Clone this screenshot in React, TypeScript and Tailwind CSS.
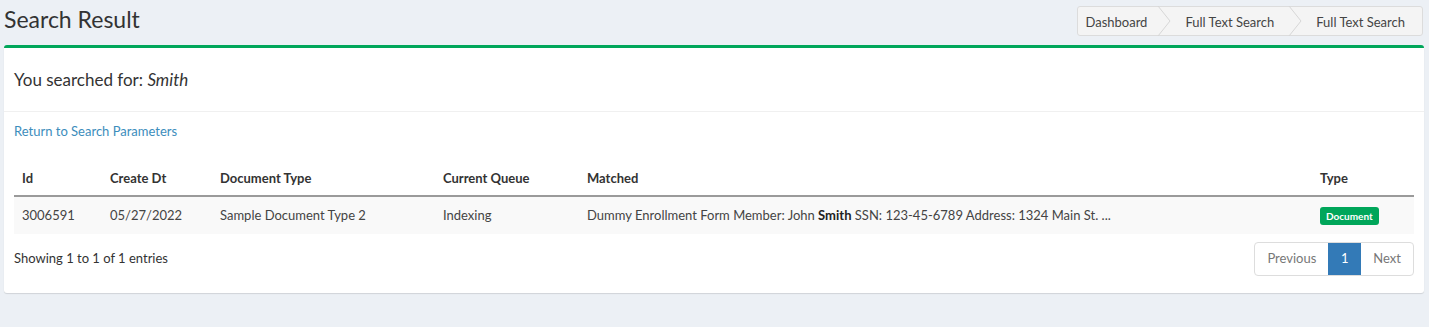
const columns = [
  { label: "Id", width: "w-[88px]" },
  { label: "Create Dt", width: "w-[110px]" },
  { label: "Document Type", width: "w-[223px]" },
  { label: "Current Queue", width: "w-[144px]" },
  { label: "Matched", width: "w-[733px]" },
  { label: "Type", width: "w-[102px]" },
];

function Chevron() {
  return (
    <svg width="14" height="30" viewBox="0 0 14 30" className="shrink-0">
      <polyline points="1,0 13,15 1,30" fill="none" stroke="#d6d6d6" strokeWidth="1" />
    </svg>
  );
}

export default function App() {
  return (
    <div className="min-h-[327px] bg-[#ecf0f5] font-['Lato','Liberation_Sans',sans-serif] text-[13px] text-[#333]">
      <div className="flex items-start justify-between pl-[4px] pr-[6px] pt-[6px]">
        <h1 className="text-[23px] leading-[26px] text-[#333]">Search Result</h1>
        <div className="flex h-[30px] items-center rounded-[3px] border border-[#dcdcdc] bg-[#f4f4f4] text-[13px] text-[#444]">
          <span className="pl-[7px] pr-[10px] pt-[3px]">Dashboard</span>
          <Chevron />
          <span className="px-[14px] pt-[3px]">Full Text Search</span>
          <Chevron />
          <span className="pl-[14px] pr-[17px] pt-[3px]">Full Text Search</span>
        </div>
      </div>

      <div className="mx-[4px] mr-[5px] mt-[9px] rounded-[3px] border-t-[3px] border-[#00a65a] bg-white shadow-[0_1px_1px_rgba(0,0,0,0.12)]">
        <div className="flex h-[64px] items-center border-b border-[#f0f0f0] px-[10px] pt-[1px] text-[17px] text-[#333]">
          You searched for:&nbsp;<em>Smith</em>
        </div>
        <div className="px-[10px] pb-[17px] pt-[10px]">
          <a href="#" className="text-[13px] leading-[18px] text-[#3c8dbc]">
            Return to Search Parameters
          </a>
          <table className="mt-[19px] w-full table-fixed border-collapse text-[13px]">
            <thead>
              <tr className="border-b-2 border-[#9a9a9a]">
                {columns.map((c) => (
                  <th key={c.label} className={`${c.width} px-[8px] py-[8px] text-left font-bold leading-[18px] text-[#333]`}>
                    {c.label}
                  </th>
                ))}
              </tr>
            </thead>
            <tbody>
              <tr className="bg-[#f9f9f9] text-[#444]">
                <td className="px-[8px] py-[9px] leading-[18px]">3006591</td>
                <td className="px-[8px] py-[9px] leading-[18px]">05/27/2022</td>
                <td className="px-[8px] py-[9px] leading-[18px]">Sample Document Type 2</td>
                <td className="px-[8px] py-[9px] leading-[18px]">Indexing</td>
                <td className="whitespace-nowrap px-[8px] py-[9px] leading-[18px]">
                  Dummy Enrollment Form Member: John <b className="text-[#222]">Smith</b> SSN: 123-45-6789 Address: 1324 Main St. ...
                </td>
                <td className="px-[8px] py-[9px] leading-[18px]">
                  <span className="rounded-[3px] bg-[#00a65a] px-[6px] py-[3px] text-[10px] font-bold text-white">
                    Document
                  </span>
                </td>
              </tr>
            </tbody>
          </table>
          <div className="mt-[8px] flex items-center justify-between">
            <span className="text-[13px] text-[#333]">Showing 1 to 1 of 1 entries</span>
            <div className="flex h-[34px] overflow-hidden rounded-[4px] border border-[#ddd] text-[13px]">
              <span className="flex items-center px-[12px] text-[#777]">Previous</span>
              <span className="flex w-[33px] items-center justify-center bg-[#337ab7] text-white">1</span>
              <span className="flex items-center px-[12px] text-[#777]">Next</span>
            </div>
          </div>
        </div>
      </div>
    </div>
  );
}
